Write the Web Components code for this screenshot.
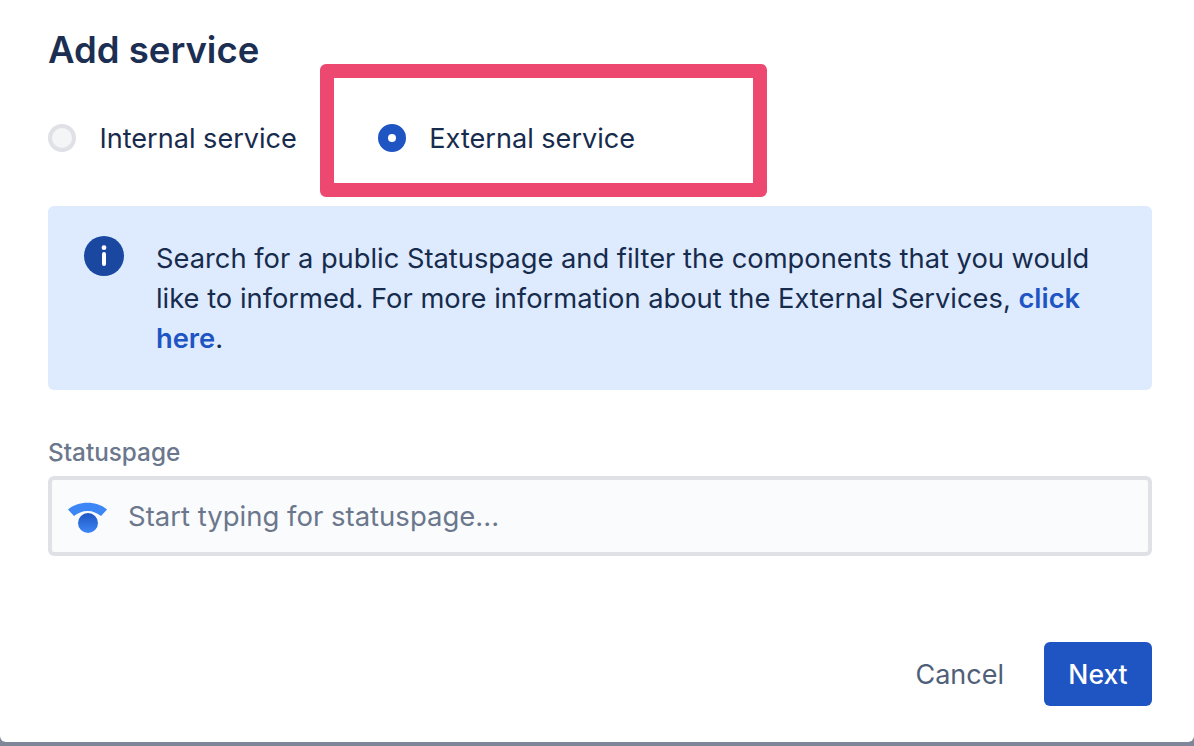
<!DOCTYPE html>
<html>
<head>
<meta charset="utf-8">
<title>Add service</title>
<style>
  html, body { margin: 0; height: 100%; }
  body {
    background: #7f8699;
    overflow: hidden;
    font-family: Inter, "Liberation Sans", sans-serif;
    color: #172b4d;
  }
</style>
</head>
<body>
<add-service-dialog>
  <span slot="title">Add service</span>
  <radio-option slot="options">Internal service</radio-option>
  <radio-option slot="options" checked highlight>External service</radio-option>
  <info-banner>
    Search for a public Statuspage and filter the components that you would like to informed. For more information about the External Services, <a href="#">click </a><a href="#">here</a>.
  </info-banner>
  <statuspage-field label="Statuspage" placeholder="Start typing for statuspage..."></statuspage-field>
  <dialog-button slot="actions">Cancel</dialog-button>
  <dialog-button slot="actions" primary>Next</dialog-button>
</add-service-dialog>

<script>
class AddServiceDialog extends HTMLElement {
  constructor() {
    super();
    this.attachShadow({ mode: "open" });
    this.shadowRoot.innerHTML = `
      <style>
        :host {
          display: flex;
          flex-direction: column;
          box-sizing: border-box;
          height: 742px;
          padding: 28px 42px 36px 48px;
          background: #fff;
          border-radius: 0 0 6px 6px;
        }
        h1 {
          margin: 0;
          height: 44px;
          font-size: 36.5px;
          line-height: 44px;
          font-weight: 600;
          color: #1c2f52;
        }
        .options {
          display: flex;
          margin-top: 46px;
          margin-bottom: 48px;
        }
        .actions {
          display: flex;
          justify-content: flex-end;
          align-items: center;
          margin-top: auto;
        }
      </style>
      <h1><slot name="title"></slot></h1>
      <div class="options"><slot name="options"></slot></div>
      <slot></slot>
      <div class="actions"><slot name="actions"></slot></div>
    `;
  }
}

class RadioOption extends HTMLElement {
  constructor() {
    super();
    this.attachShadow({ mode: "open" });
    this.shadowRoot.innerHTML = `
      <style>
        :host {
          display: flex;
          align-items: center;
          position: relative;
          height: 40px;
          margin-right: 81px;
          font-size: 27.1px;
          color: #172b4d;
        }
        .dot {
          box-sizing: border-box;
          width: 28px;
          height: 28px;
          margin-right: 23.4px;
          border-radius: 50%;
          background: #f4f5f7;
          border: 4px solid #dfe1e6;
        }
        :host([checked]) .dot {
          background: #fff;
          border: 10px solid #1f55c3;
        }
        .mark {
          display: none;
          position: absolute;
          left: -58px;
          top: -54px;
          width: 447px;
          height: 133px;
          box-sizing: border-box;
          border: 14px solid #ed4870;
          border-radius: 6px;
        }
        :host([highlight]) .mark { display: block; }
      </style>
      <span class="dot"></span>
      <slot></slot>
      <span class="mark"></span>
    `;
  }
}

class InfoBanner extends HTMLElement {
  constructor() {
    super();
    this.attachShadow({ mode: "open" });
    this.shadowRoot.innerHTML = `
      <style>
        :host {
          display: flex;
          box-sizing: border-box;
          height: 184px;
          padding: 32px 36px;
          background: #deebff;
          border-radius: 6px;
          font-size: 27.3px;
          line-height: 40.4px;
          color: #172b4d;
        }
        svg { flex: none; width: 40px; height: 40px; margin-top: -2px; margin-right: 32px; }
        ::slotted(a) { color: #1f55c3; font-weight: 600; text-decoration: none; }
        .text { padding-top: 0.6px; }
      </style>
      <svg viewBox="0 0 40 40" aria-hidden="true">
        <circle cx="20" cy="20" r="20" fill="#1a48a0"/>
        <circle cx="20" cy="11.7" r="2.4" fill="#fff"/>
        <rect x="18" y="16" width="4" height="14" rx="2" fill="#fff"/>
      </svg>
      <div class="text"><slot></slot></div>
    `;
  }
}

class StatuspageField extends HTMLElement {
  constructor() {
    super();
    this.attachShadow({ mode: "open" });
    this.shadowRoot.innerHTML = `
      <style>
        :host {
          display: block;
          margin-top: 46px;
        }
        label {
          display: block;
          height: 40px;
          font-size: 24.3px;
          line-height: 32px;
          font-weight: 500;
          color: #6b778c;
        }
        .box {
          display: flex;
          align-items: center;
          box-sizing: border-box;
          height: 80px;
          padding-left: 16px;
          background: #fafbfc;
          border: 4px solid #dfe1e6;
          border-radius: 6px;
          font-size: 27.5px;
          color: #6b778c;
        }
        svg { flex: none; width: 40px; height: 36px; margin-right: 20px; }
      </style>
      <label></label>
      <div class="box">
        <svg viewBox="0 0 40 36" aria-hidden="true">
          <defs>
            <linearGradient id="sp-dot" x1="0" y1="0" x2="0" y2="1">
              <stop offset="0" stop-color="#1f55c3"/>
              <stop offset="1" stop-color="#3d86f5"/>
            </linearGradient>
          </defs>
          <path d="M0 11.5 C5 7 12 4.7 19.5 4.7 C27 4.7 34 7 39 11.5 L33 18 C29 15 25 13 19.5 13 C14 13 10 15 6 18 Z" fill="#3d86f5"/>
          <circle cx="20" cy="25" r="10" fill="url(#sp-dot)"/>
        </svg>
        <span class="placeholder"></span>
      </div>
    `;
  }

  connectedCallback() {
    this.shadowRoot.querySelector("label").textContent = this.getAttribute("label");
    this.shadowRoot.querySelector(".placeholder").textContent = this.getAttribute("placeholder");
  }
}

class DialogButton extends HTMLElement {
  constructor() {
    super();
    this.attachShadow({ mode: "open" });
    this.shadowRoot.innerHTML = `
      <style>
        :host {
          display: flex;
          align-items: center;
          justify-content: center;
          box-sizing: border-box;
          height: 64px;
          padding: 0 24px;
          margin-left: 16px;
          border-radius: 6px;
          font-size: 27px;
          font-weight: 400;
          color: #505f79;
        }
        :host([primary]) {
          font-size: 26.5px;
          font-weight: 500;
          background: #1f55c3;
          color: #fff;
          width: 108px;
          padding: 0;
        }
      </style>
      <slot></slot>
    `;
  }
}

customElements.define("add-service-dialog", AddServiceDialog);
customElements.define("radio-option", RadioOption);
customElements.define("info-banner", InfoBanner);
customElements.define("statuspage-field", StatuspageField);
customElements.define("dialog-button", DialogButton);
</script>
</body>
</html>
